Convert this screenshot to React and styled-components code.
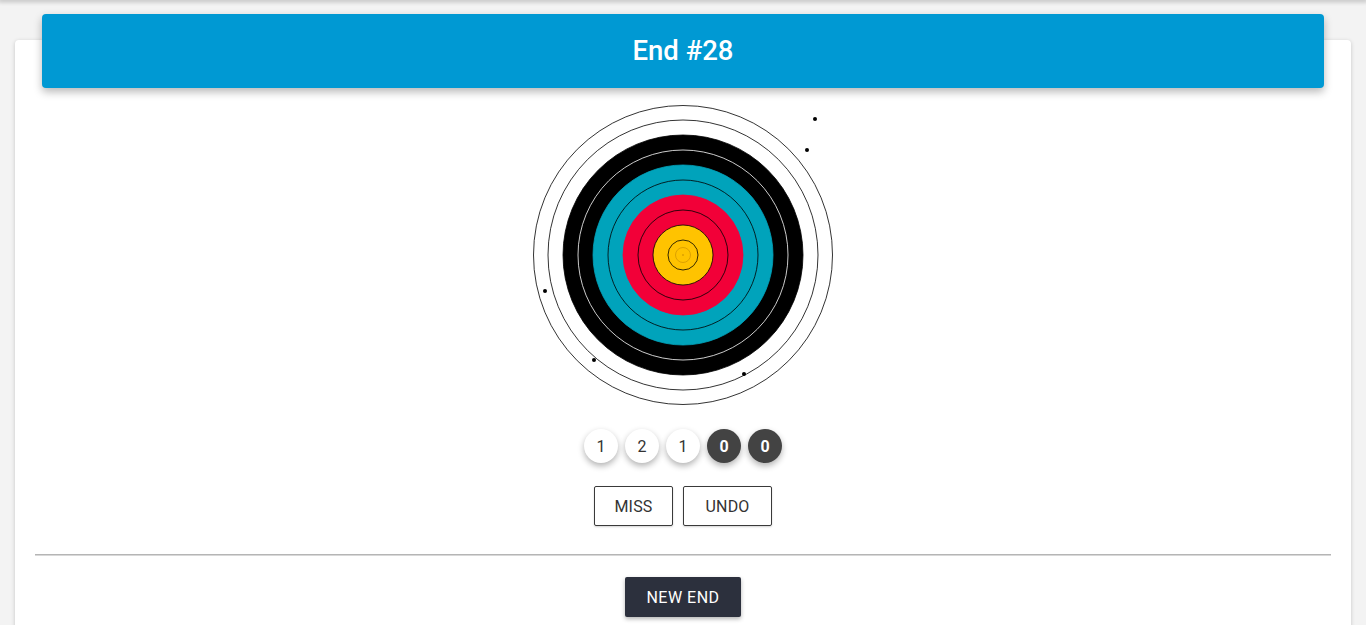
import React from "react";
import styled, { createGlobalStyle } from "styled-components";

const Global = createGlobalStyle`
  html, body { margin: 0; padding: 0; background: #f3f3f3; }
  body { font-family: Roboto, "Noto Sans", Arial, sans-serif; overflow: hidden; }
  * { box-sizing: border-box; }
`;

const TopShadow = styled.div`
  height: 0;
  box-shadow: 0 0 4px 2px rgba(0,0,0,0.22);
`;

const Page = styled.div`
  padding: 40px 15px 0;
  height: 625px;
  overflow: hidden;
`;

const Card = styled.div`
  background: #fff;
  border-radius: 4px;
  box-shadow: 0 1px 4px rgba(0,0,0,0.18);
  padding: 0 20px 20px;
  display: flex;
  flex-direction: column;
  align-items: stretch;
  min-height: 620px;
`;

const Header = styled.div`
  margin: -26px 7px 0;
  height: 74px;
  background: #0099d3;
  border-radius: 4px;
  box-shadow: 0 4px 8px rgba(0,0,0,0.28);
  color: #fff;
  display: flex;
  align-items: center;
  justify-content: center;
  font-size: 27.5px;
  font-weight: 500;
  padding-bottom: 2px;
`;

const TargetWrap = styled.div`
  display: flex;
  justify-content: center;
  margin-top: 17px;
`;

const Scores = styled.div`
  display: flex;
  justify-content: center;
  gap: 7px;
  margin-top: 24px;
`;

const Score = styled.div`
  width: 34px;
  height: 34px;
  border-radius: 50%;
  display: flex;
  align-items: center;
  justify-content: center;
  font-size: 16px;
  background: ${(p) => (p.$dark ? "#434343" : "#fff")};
  color: ${(p) => (p.$dark ? "#fff" : "#333")};
  font-weight: ${(p) => (p.$dark ? 700 : 400)};
  box-shadow: 0 3px 6px rgba(0,0,0,0.3);
`;

const Actions = styled.div`
  display: flex;
  justify-content: center;
  gap: 10px;
  margin-top: 23px;
`;

const OutlineButton = styled.button`
  height: 40px;
  width: ${(p) => p.$w}px;
  padding: 0;
  background: #fff;
  border: 1px solid #3a3a3a;
  border-radius: 2px;
  font-family: Roboto, sans-serif;
  font-size: 16px;
  letter-spacing: 0.2px;
  color: #333;
  box-shadow: 0 1px 2px rgba(0,0,0,0.18);
`;

const Divider = styled.hr`
  margin: 28px 0 0;
  border: none;
  border-top: 1px solid #b5b5b5;
  height: 0;
  box-shadow: 0 1px 0 #d8d8d8;
`;

const Footer = styled.div`
  display: flex;
  justify-content: center;
  margin-top: 22px;
`;

const DarkButton = styled.button`
  height: 40px;
  width: 116px;
  background: #2c303d;
  color: #fff;
  border: none;
  border-radius: 2px;
  font-family: Roboto, sans-serif;
  font-size: 16px;
  letter-spacing: 0.5px;
  box-shadow: 0 2px 4px rgba(0,0,0,0.3);
`;

const rings = [
  { r: 149.5, fill: "#fff", stroke: "#000" },
  { r: 135, fill: "#fff", stroke: "#000" },
  { r: 120, fill: "#000", stroke: "#000" },
  { r: 105, fill: "#000", stroke: "#fff" },
  { r: 90, fill: "#00a3bb", stroke: "#00a3bb" },
  { r: 75, fill: "#00a3bb", stroke: "#000" },
  { r: 60, fill: "#f20038", stroke: "#f20038" },
  { r: 45, fill: "#f20038", stroke: "#000" },
  { r: 30, fill: "#ffc300", stroke: "#000" },
  { r: 15, fill: "#ffc300", stroke: "#000" },
  { r: 7.5, fill: "#ffc300", stroke: "#c48a00" },
];

const arrows = [
  [815, 119],
  [807, 150],
  [545, 291],
  [594, 360],
  [744, 374],
];

function Target() {
  const ox = 533;
  const oy = 105;
  return (
    <svg width="300" height="300" viewBox="0 0 300 300">
      {rings.map((ring, i) => (
        <circle
          key={i}
          cx="150"
          cy="150"
          r={ring.r}
          fill={ring.fill}
          stroke={ring.stroke}
          strokeWidth={ring.r < 10 ? 0.6 : 0.8}
        />
      ))}
      <circle cx="150" cy="150" r="0.8" fill="#c48a00" />
      {arrows.map(([x, y], i) => (
        <circle key={i} cx={x - ox} cy={y - oy} r="2" fill="#000" />
      ))}
    </svg>
  );
}

export default function App() {
  const scores = [
    { v: "1" },
    { v: "2" },
    { v: "1" },
    { v: "0", dark: true },
    { v: "0", dark: true },
  ];
  return (
    <>
      <Global />
      <TopShadow />
      <Page>
        <Card>
          <Header>End #28</Header>
          <TargetWrap>
            <Target />
          </TargetWrap>
          <Scores>
            {scores.map((s, i) => (
              <Score key={i} $dark={s.dark}>
                {s.v}
              </Score>
            ))}
          </Scores>
          <Actions>
            <OutlineButton $w={79}>MISS</OutlineButton>
            <OutlineButton $w={89}>UNDO</OutlineButton>
          </Actions>
          <Divider />
          <Footer>
            <DarkButton>NEW END</DarkButton>
          </Footer>
        </Card>
      </Page>
    </>
  );
}
